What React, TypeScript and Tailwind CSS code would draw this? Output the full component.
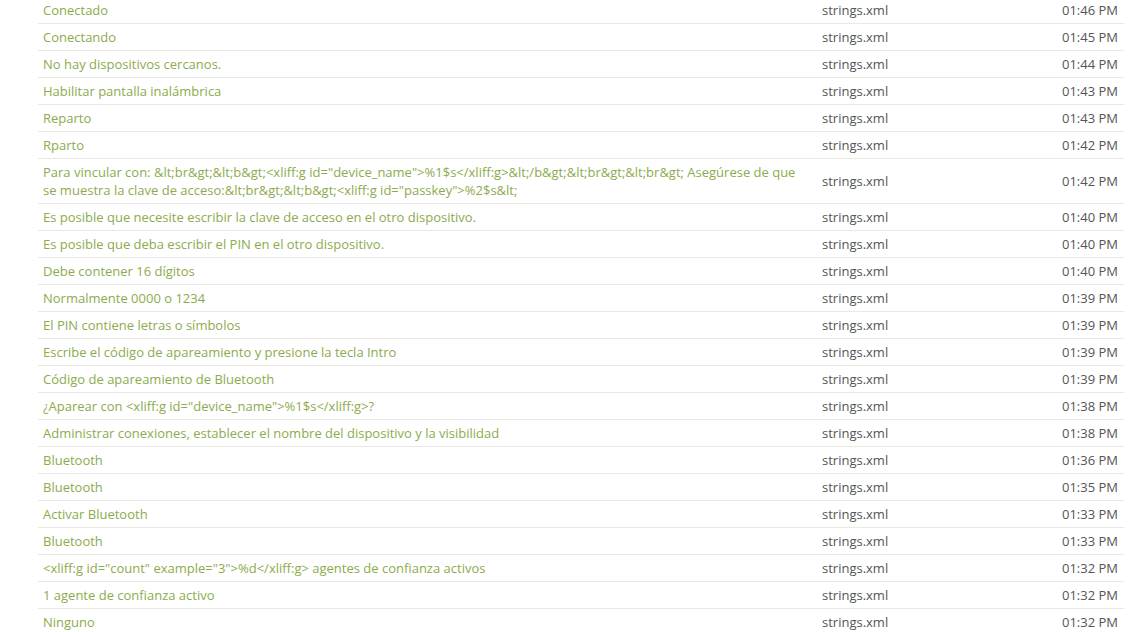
const ROWS: [string, string][] = [
  ["Conectado", "01:46 PM"],
  ["Conectando", "01:45 PM"],
  ["No hay dispositivos cercanos.", "01:44 PM"],
  ["Habilitar pantalla inalámbrica", "01:43 PM"],
  ["Reparto", "01:43 PM"],
  ["Rparto", "01:42 PM"],
  [
    'Para vincular con: &lt;br&gt;&lt;b&gt;<xliff:g id="device_name">%1$s</xliff:g>&lt;/b&gt;&lt;br&gt;&lt;br&gt; Asegúrese de que se muestra la clave de acceso:&lt;br&gt;&lt;b&gt;<xliff:g id="passkey">%2$s&lt;',
    "01:42 PM",
  ],
  ["Es posible que necesite escribir la clave de acceso en el otro dispositivo.", "01:40 PM"],
  ["Es posible que deba escribir el PIN en el otro dispositivo.", "01:40 PM"],
  ["Debe contener 16 dígitos", "01:40 PM"],
  ["Normalmente 0000 o 1234", "01:39 PM"],
  ["El PIN contiene letras o símbolos", "01:39 PM"],
  ["Escribe el código de apareamiento y presione la tecla Intro", "01:39 PM"],
  ["Código de apareamiento de Bluetooth", "01:39 PM"],
  ['¿Aparear con <xliff:g id="device_name">%1$s</xliff:g>?', "01:38 PM"],
  ["Administrar conexiones, establecer el nombre del dispositivo y la visibilidad", "01:38 PM"],
  ["Bluetooth", "01:36 PM"],
  ["Bluetooth", "01:35 PM"],
  ["Activar Bluetooth", "01:33 PM"],
  ["Bluetooth", "01:33 PM"],
  ['<xliff:g id="count" example="3">%d</xliff:g> agentes de confianza activos', "01:32 PM"],
  ["1 agente de confianza activo", "01:32 PM"],
  ["Ninguno", "01:32 PM"],
];

export default function App() {
  return (
    <div className="w-[1144px] h-[632px] overflow-hidden bg-white font-['Open_Sans',sans-serif] text-[13px] leading-[18px]">
      <div className="ml-[38px] mr-[20px] -mt-[3px]">
        {ROWS.map(([text, time], i) => (
          <div key={i} className="flex items-center border-b border-[#e8e8e4]">
            <div className="w-[778px] shrink-0 py-[4px] pl-[5px] pr-[6px] text-[#8cab4e]">{text}</div>
            <div className="flex-1 py-[4px] px-[6px] text-[#555]">strings.xml</div>
            <div className="py-[4px] px-[6px] text-right text-[#555]">{time}</div>
          </div>
        ))}
      </div>
    </div>
  );
}
